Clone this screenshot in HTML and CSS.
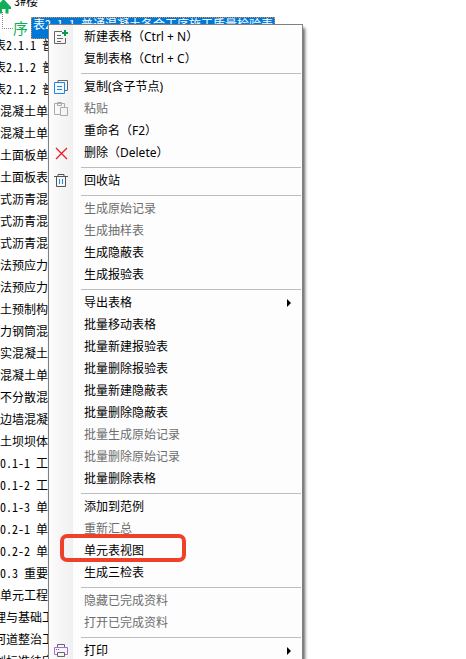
FILE: index.html
```html
<!DOCTYPE html>
<html lang="zh-CN">
<head>
<meta charset="utf-8">
<title>单元表</title>
<link rel="stylesheet" href="styles.css">
</head>
<body>
<main class="tree">
  <div class="row row-root">
    <svg class="home" viewBox="0 0 12 16" aria-hidden="true"><path d="M-4 9 3.500 1 11 9v2H8.500v4.500H5.500V11H2v4.500H-1V11z" fill="#0fae57"/></svg>
    <span>3#楼</span>
  </div>
  <div class="row row-selected">
    <span class="branch"></span>
    <span class="mark">序</span>
    <span class="selected">表2.1.1 普通混凝土各合工序施工质量检验表</span>
  </div>
  <div class="row out-half">表2.1.1 普</div>
  <div class="row out-half">表2.1.2 普</div>
  <div class="row out-half">表2.1.2 普</div>
  <div class="row">混凝土单</div>
  <div class="row">混凝土单</div>
  <div class="row">土面板单</div>
  <div class="row">土面板表</div>
  <div class="row">式沥青混</div>
  <div class="row">式沥青混</div>
  <div class="row">式沥青混</div>
  <div class="row">法预应力</div>
  <div class="row">法预应力</div>
  <div class="row">土预制构</div>
  <div class="row">力钢筒混</div>
  <div class="row">实混凝土</div>
  <div class="row">混凝土单</div>
  <div class="row">不分散混</div>
  <div class="row">边墙混凝</div>
  <div class="row">土坝坝体</div>
  <div class="row">0.1-1 工</div>
  <div class="row">0.1-2 工</div>
  <div class="row">0.1-3 单</div>
  <div class="row">0.2-1 单</div>
  <div class="row">0.2-2 单</div>
  <div class="row">0.3 重要</div>
  <div class="row">单元工程</div>
  <div class="row out-half">理与基础工</div>
  <div class="row out-half">河道整治工</div>
  <div class="row out-half">划标准待定</div>
</main>

<div class="menu" role="menu">
  <button class="item" role="menuitem"><svg class="icon" viewBox="0 0 16 16" aria-hidden="true"><path d="M9 2.500H1.500v12h11V9M4 6.500h4M4 9.500h6M4 12.500h4" fill="none" stroke="#666"/><path d="M12 1v6M9 4h6" stroke="#0a9b4a" stroke-width="2"/></svg>新建表格（Ctrl + N）</button>
  <button class="item" role="menuitem">复制表格（Ctrl + C）</button>
  <hr>
  <button class="item" role="menuitem"><svg class="icon" viewBox="0 0 16 16" aria-hidden="true"><path d="M5 3V1.500h9.500v10H12" fill="none" stroke="#666"/><path d="M1.500 3.500h10v11h-10zM4 7.500h5M4 10.500h5" fill="none" stroke="#1c86ee"/></svg>复制(含子节点)</button>
  <button class="item" role="menuitem" disabled><svg class="icon" viewBox="0 0 16 16" aria-hidden="true"><path d="M7 13.500H1.500v-11h10V6M4.500 1.500h4v3h-4zM7.500 6.500h7v8h-7z" fill="none" stroke="#aaa"/></svg>粘贴</button>
  <button class="item" role="menuitem">重命名（F2）</button>
  <button class="item" role="menuitem"><svg class="icon" viewBox="0 0 16 16" aria-hidden="true"><path d="M3 3l11 11M14 3L3 14" stroke="#ec1c24" stroke-width="1.300"/></svg>删除（Delete）</button>
  <hr>
  <button class="item" role="menuitem"><svg class="icon" viewBox="0 0 16 16" aria-hidden="true"><path d="M1 3.500h14M5 3V1.500h6V3M3.500 4v9.500h9V4" fill="none" stroke="#555"/><path d="M6.500 6v5M9.500 6v5" stroke="#1c86ee"/></svg>回收站</button>
  <hr>
  <button class="item" role="menuitem" disabled>生成原始记录</button>
  <button class="item" role="menuitem" disabled>生成抽样表</button>
  <button class="item" role="menuitem">生成隐蔽表</button>
  <button class="item" role="menuitem">生成报验表</button>
  <hr>
  <button class="item submenu" role="menuitem" aria-haspopup="menu">导出表格</button>
  <button class="item" role="menuitem">批量移动表格</button>
  <button class="item" role="menuitem">批量新建报验表</button>
  <button class="item" role="menuitem">批量删除报验表</button>
  <button class="item" role="menuitem">批量新建隐蔽表</button>
  <button class="item" role="menuitem">批量删除隐蔽表</button>
  <button class="item" role="menuitem" disabled>批量生成原始记录</button>
  <button class="item" role="menuitem" disabled>批量删除原始记录</button>
  <button class="item" role="menuitem">批量删除表格</button>
  <hr>
  <button class="item" role="menuitem">添加到范例</button>
  <button class="item" role="menuitem" disabled>重新汇总</button>
  <button class="item ringed" role="menuitem">单元表视图</button>
  <button class="item" role="menuitem">生成三检表</button>
  <hr>
  <button class="item" role="menuitem" disabled>隐藏已完成资料</button>
  <button class="item" role="menuitem" disabled>打开已完成资料</button>
  <hr>
  <button class="item submenu" role="menuitem" aria-haspopup="menu"><svg class="icon" viewBox="0 0 16 16" aria-hidden="true"><path d="M4 11.500H1.500v-7h13v7H12" fill="none" stroke="#a66be0"/><path d="M4.500 4V1.500h7V4M4.500 9.500h7v4h-7z" fill="none" stroke="#666"/><path d="M3 6.500h1" stroke="#e33"/><path d="M5 6.500h1" stroke="#1c86ee"/></svg>打印</button>
</div>
</body>
</html>
```
FILE: styles.css
```css
*,
*::before,
*::after {
  box-sizing: border-box;
}

body {
  margin: 0;
  height: 100vh;
  overflow: hidden;
  position: relative;
  background: #fff;
  color: #000;
  font: 12px/22px "Noto Sans", "Noto Sans CJK SC", sans-serif;
}

.tree {
  margin-top: -10px;
  font-family: "Noto Sans CJK SC", sans-serif;
  font-feature-settings: "hwid";
}

.row {
  display: flex;
  height: 22px;
  white-space: pre;
}

.out-half {
  margin-left: -6px;
}

.row-root {
  gap: 2px;
}

.home {
  width: 12px;
  height: 16px;
  margin-top: 8px;
}

.branch {
  width: 11px;
  height: 17px;
  margin-left: 2px;
  border-left: 1px dotted #888;
  border-bottom: 1px dotted #888;
}

.mark {
  width: 18px;
  padding-top: 5px;
  color: #0fae57;
  font-size: 15px;
}

.selected {
  height: 22px;
  margin-top: 5px;
  padding: 0 1px;
  border: 1px dotted #e08a3c;
  background: #0078d7;
  color: #fff;
  line-height: 12px;
}

.menu {
  position: absolute;
  top: 24px;
  left: 48px;
  width: 255px;
  padding: 1px 0;
  border: 1px solid #808080;
  background: linear-gradient(90deg, #fcfcfc, #f0f0f0 24px, #fdfdfd 24px);
  box-shadow: 2px 4px 3px #0009;
}

.item {
  position: relative;
  display: block;
  width: 100%;
  height: 22px;
  padding: 0 0 0 35px;
  border: 0;
  background: none;
  color: #000;
  font: inherit;
  text-align: left;
  white-space: nowrap;
}

.item:disabled {
  color: #6d6d6d;
}

.icon {
  position: absolute;
  top: 3px;
  left: 4px;
  width: 16px;
  height: 16px;
}

.submenu::after {
  content: "";
  position: absolute;
  top: 7px;
  right: 11px;
  border: 4px solid transparent;
  border-left-color: #000;
  border-right: 0;
}

.ringed::before {
  content: "";
  position: absolute;
  top: -6px;
  left: 11px;
  width: 126px;
  height: 28px;
  border: 4px solid #ef4029;
  border-radius: 7px;
}

hr {
  height: 1px;
  margin: 3px 1px 2px 32px;
  border: 0;
  background: #bdbdbd;
}
```
